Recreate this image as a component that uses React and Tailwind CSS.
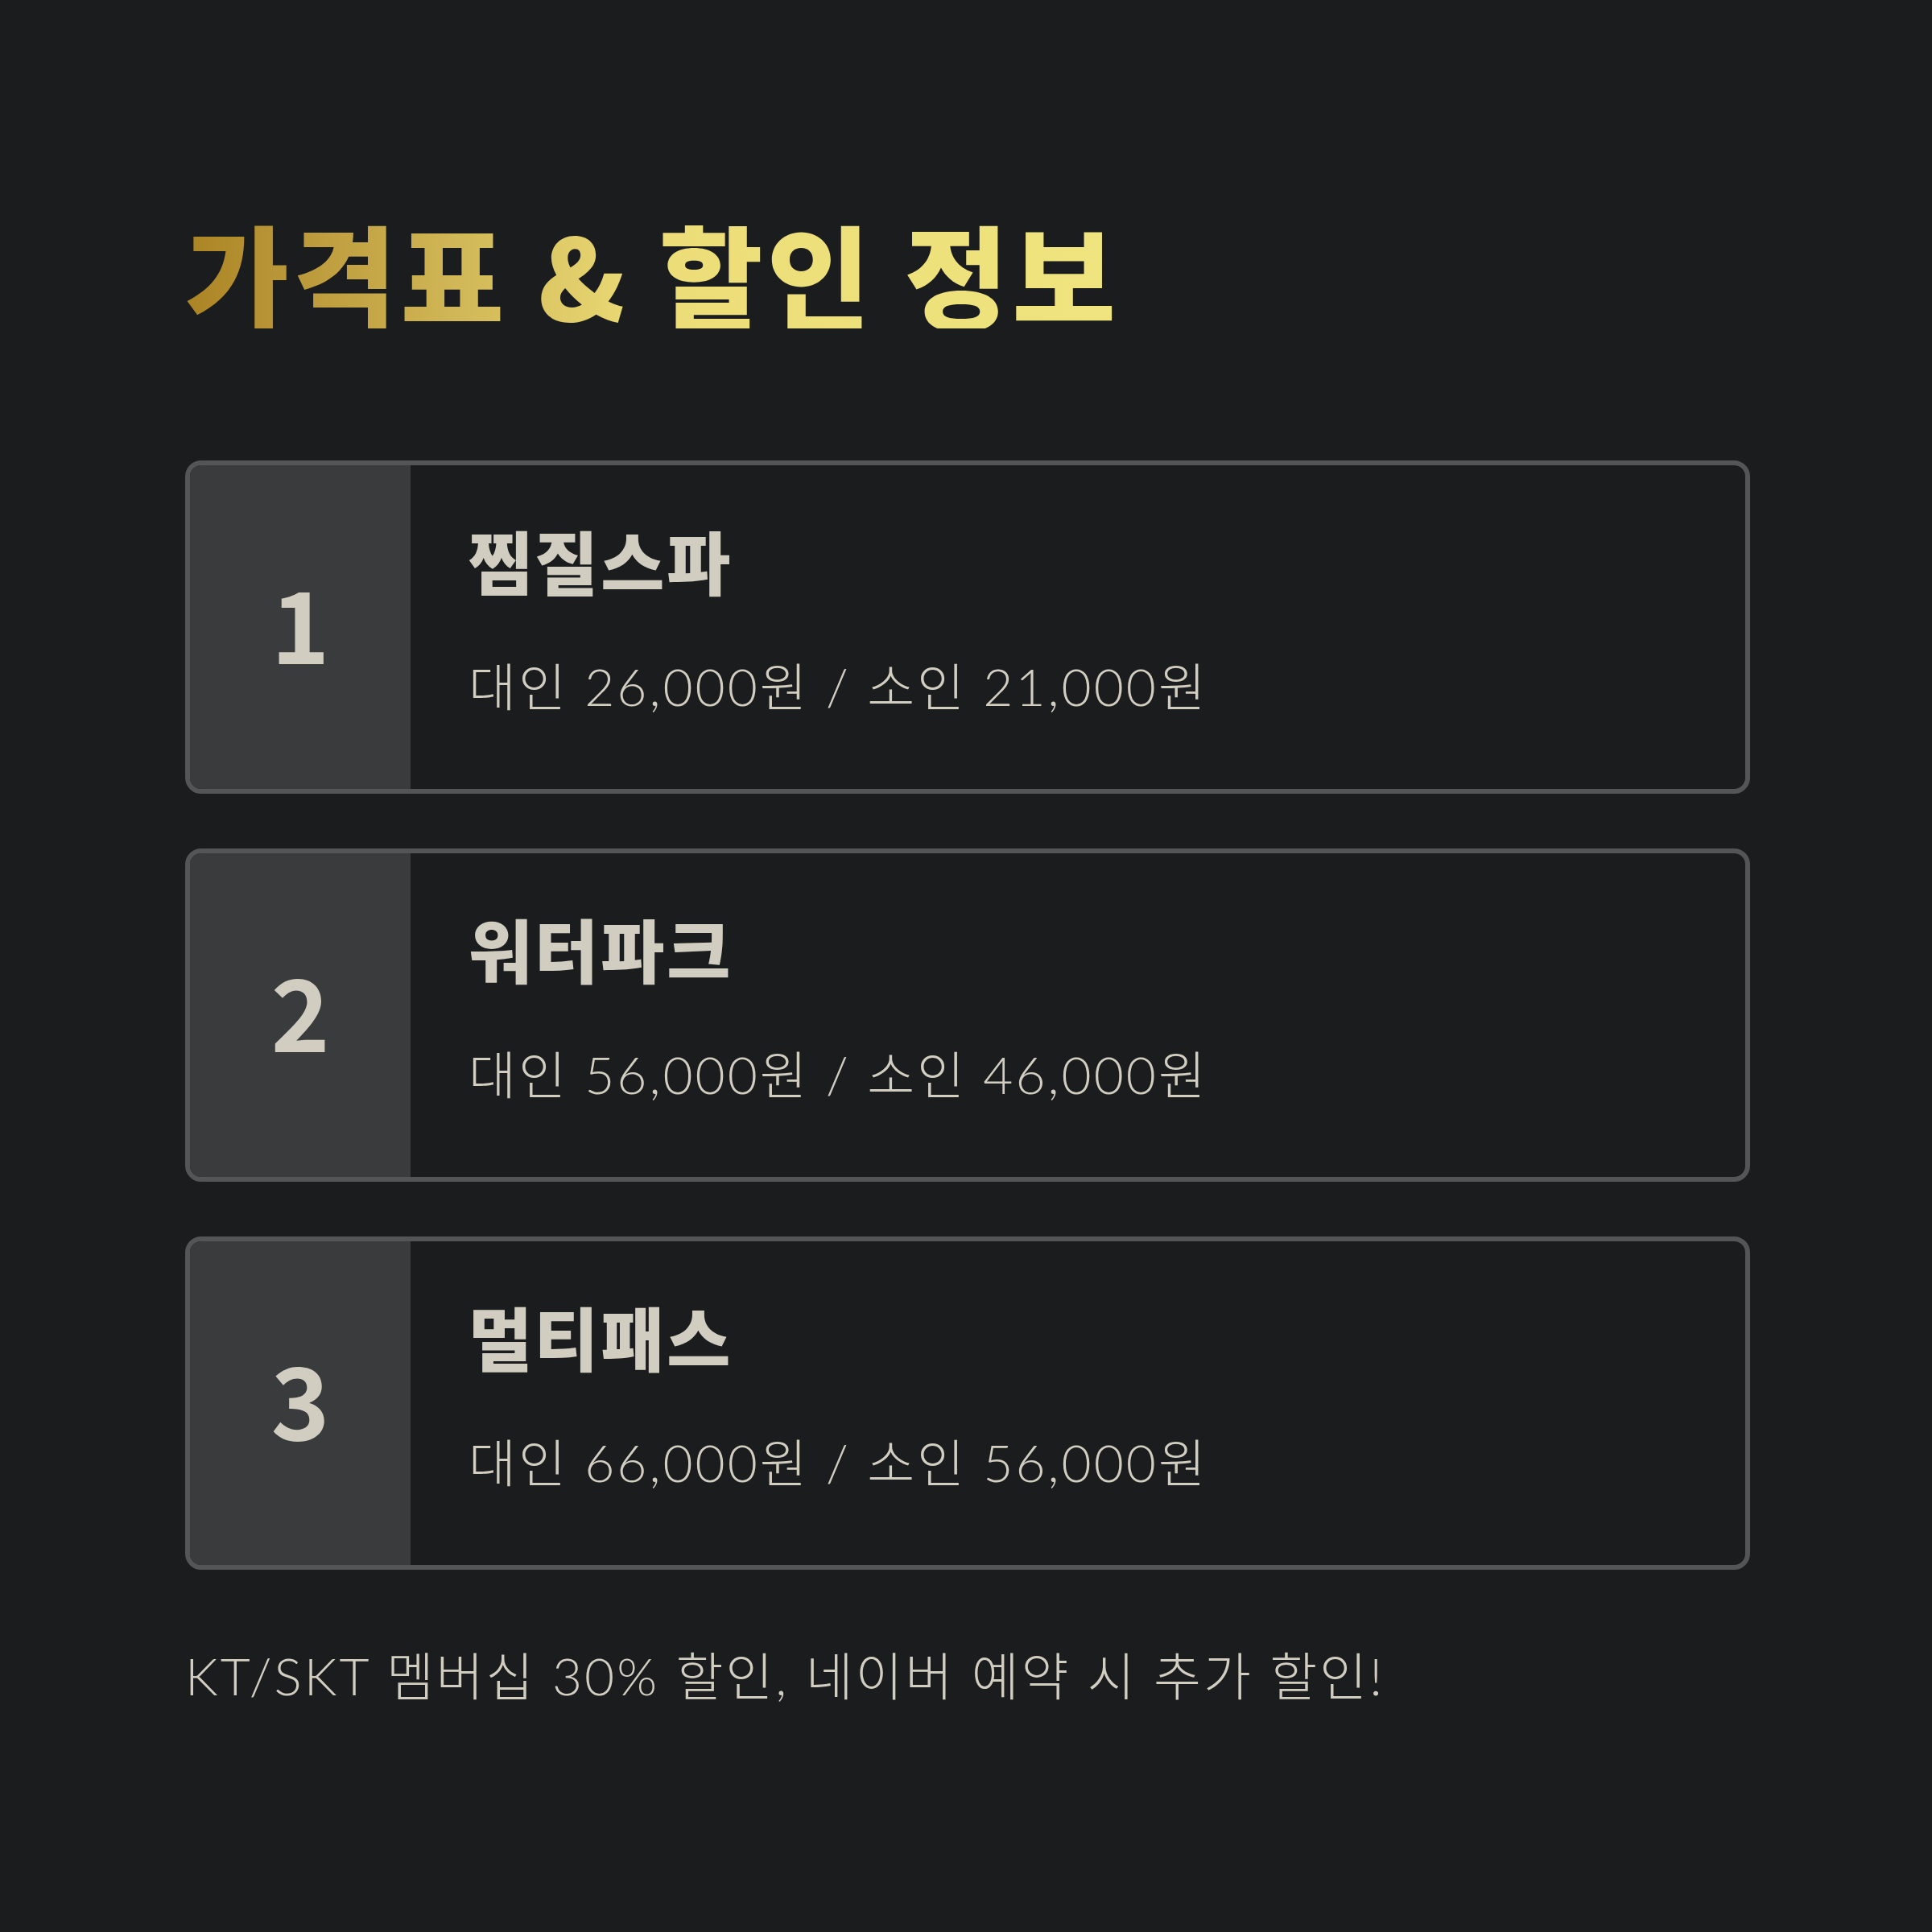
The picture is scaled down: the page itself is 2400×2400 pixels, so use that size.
// 가격표 & 할인 정보 카드

const items = [
  { no: 1, name: "찜질스파", adult: "26,000", child: "21,000" },
  { no: 2, name: "워터파크", adult: "56,000", child: "46,000" },
  { no: 3, name: "멀티패스", adult: "66,000", child: "56,000" },
];

function PriceCard({ item }) {
  return (
    <div className="flex h-[414px] rounded-[20px] border-[6px] border-[#545557] overflow-hidden bg-[#1b1c1e]">
      {/* number column */}
      <div className="flex w-[274px] shrink-0 items-center justify-center bg-[#3a3b3d] pb-[16px] font-['Noto_Sans_CJK_KR',sans-serif] text-[124px] font-bold leading-none text-[#d1cdc1]">
        {item.no}
      </div>

      {/* content */}
      <div className="flex flex-col justify-center pl-[72px] pb-[20px] text-[#d1cdc1]">
        <h2 className="font-['Noto_Sans_CJK_KR',sans-serif] text-[86px] font-black leading-none tracking-[3px]">
          {item.name}
        </h2>
        <p className="mt-[82px] font-['Lato','Noto_Sans_CJK_KR',sans-serif] text-[64px] font-light leading-none tracking-[3px]">
          대인 {item.adult}원 / 소인 {item.child}원
        </p>
      </div>
    </div>
  );
}

export default function App() {
  return (
    <div className="w-[2400px] h-[2400px] bg-[#1b1c1e] pl-[230px] pr-[226px] pt-[268px]">
      {/* Title */}
      <h1 className="inline-block bg-gradient-to-r from-[#ab8424] via-[#ecdd78] via-50% to-[#efe47e] bg-clip-text font-['Noto_Sans_CJK_KR',sans-serif] text-[140px] font-black leading-none tracking-[5px] text-transparent">
        가격표 &amp; 할인 정보
      </h1>

      {/* Cards */}
      <div className="mt-[164px] flex flex-col gap-[68px]">
        {items.map((item) => (
          <PriceCard key={item.no} item={item} />
        ))}
      </div>

      {/* Footer note */}
      <p className="mt-[100px] font-['Lato','Noto_Sans_CJK_KR',sans-serif] text-[64px] font-light leading-none tracking-[3px] text-[#d1cdc1]">
        KT/SKT 멤버십 30% 할인, 네이버 예약 시 추가 할인!
      </p>
    </div>
  );
}
